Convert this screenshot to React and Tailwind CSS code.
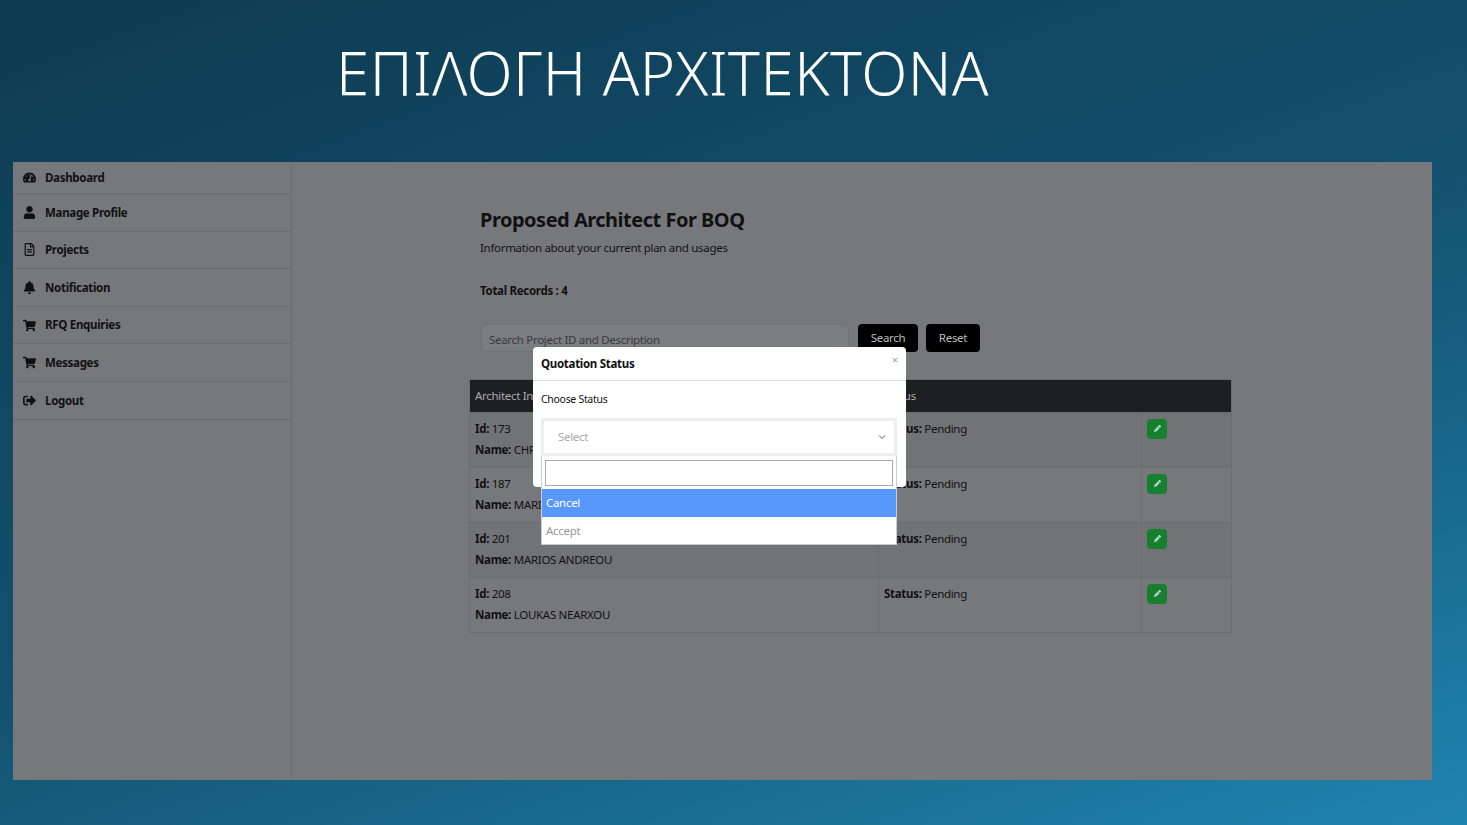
import React from "react";
import { FaTachometerAlt, FaUser, FaRegFileAlt, FaBell, FaShoppingCart, FaSignOutAlt, FaPencilAlt } from "react-icons/fa";

const nav = [
  [FaTachometerAlt, "Dashboard"],
  [FaUser, "Manage Profile"],
  [FaRegFileAlt, "Projects"],
  [FaBell, "Notification"],
  [FaShoppingCart, "RFQ Enquiries"],
  [FaShoppingCart, "Messages"],
  [FaSignOutAlt, "Logout"],
];
const rows = [
  ["173", "CHRISTOS"],
  ["187", "MARIA"],
  ["201", "MARIOS ANDREOU"],
  ["208", "LOUKAS NEARXOU"],
];

export default function App() {
  return (
    <div className="w-[1467px] h-[825px] overflow-hidden bg-[linear-gradient(160deg,#0e3a52_0%,#13506d_50%,#1f84b0_100%)] flex flex-col" style={{ fontFamily: '"Noto Sans", "Open Sans", sans-serif' }}>
      <div className="h-[162px] pl-[336px] pt-[42px] text-white text-[60px] font-light leading-none tracking-[0.5px]">ΕΠΙΛΟΓΗ ΑΡΧΙΤΕΚΤΟΝΑ</div>
      <div className="relative ml-[13px] w-[1419px] h-[618px] bg-[#77787c] flex tracking-[-0.3px]">
        <div className="w-[279px] border-r border-[#6c6d71] h-full">
          {nav.map(([I, t], i) => (
            <div key={t} className={`${i === 0 ? "h-[32px]" : "h-[37.6px]"} flex items-center gap-[9px] pl-[10px] border-b border-[#6c6d71] text-[11.5px] font-bold text-[#111]`}>
              <I className="w-[13px] h-[13px]" /> {t}
            </div>
          ))}
        </div>
        <div className="flex-1 pl-[188px] pt-[48px] text-[#111]">
          <div className="text-[20px] font-bold leading-none tracking-[-0.5px]">Proposed Architect For BOQ</div>
          <div className="text-[11.5px] mt-[9px]">Information about your current plan and usages</div>
          <div className="text-[11.5px] font-bold mt-[26px]">Total Records : 4</div>
          <div className="flex items-center mt-[24px] gap-[8px] ml-[1px]">
            <div className="w-[368px] h-[28px] bg-[#7c7d81] border border-[#707175] rounded-sm text-[11.5px] text-[#3a3b3d] pl-[7px] pt-[6px]">Search Project ID and Description</div>
            <div className="ml-[1px] w-[60px] h-[28px] rounded bg-black text-[#bbb] text-[11.5px] flex items-center justify-center">Search</div>
            <div className="w-[54px] h-[28px] rounded bg-black text-[#bbb] text-[11.5px] flex items-center justify-center">Reset</div>
          </div>
          <div className="mt-[27px] -ml-[11px] w-[763px] border border-[#6c6d71] text-[11.5px]">
            <div className="h-[32px] bg-[#1e1f22] text-[#aaa] flex items-center">
              <div className="w-[409px] pl-[5px]">Architect Info</div>
              <div className="w-[263px] pl-[5px]">Status</div>
            </div>
            {rows.map(([id, n], i) => (
              <div key={id} className={`h-[55px] flex border-t border-[#6c6d71] ${i % 2 === 0 ? "bg-[#727377]" : ""}`}>
                <div className="w-[409px] pl-[5px] pt-[5px] border-r border-[#6c6d71] leading-[21px]">
                  <div><b>Id:</b> {id}</div>
                  <div><b>Name:</b> {n}</div>
                </div>
                <div className="w-[263px] pl-[5px] pt-[5px] border-r border-[#6c6d71] leading-[21px]"><b>Status:</b> Pending</div>
                <div className="pl-[5px] pt-[6px]">
                  <div className="w-[20px] h-[20px] rounded-sm bg-[#17802f] flex items-center justify-center"><FaPencilAlt className="w-[7px] h-[7px] text-[#cde]" /></div>
                </div>
              </div>
            ))}
          </div>
        </div>
        <div className="absolute left-[520px] top-[185px] w-[373px] h-[140px] bg-white rounded-sm text-[#111]">
          <div className="h-[34px] border-b border-[#ddd] flex items-center justify-between px-[8px]">
            <span className="text-[11.5px] font-bold">Quotation Status</span>
            <span className="text-[#999] text-[11px] -mt-[6px]">×</span>
          </div>
          <div className="text-[10.5px] px-[8px] pt-[11px]">Choose Status</div>
        </div>
        <div className="absolute left-[528px] top-[256px] w-[356px] text-[11.5px]">
          <div className="h-[38px] border-[3px] border-[#eee] bg-white flex items-center justify-between pl-[14px] pr-[8px] text-[#aaa]">
            <span>Select</span>
            <svg width="8" height="6" viewBox="0 0 8 6"><path d="M1 1.5l3 3 3-3" stroke="#555" fill="none" strokeWidth="1" /></svg>
          </div>
          <div className="bg-white border border-[#ccc] border-t-0">
            <div className="p-[3px] pt-[4px]"><div className="h-[26px] border border-[#aaa]"></div></div>
            <div className="h-[28px] bg-[#5897fb] text-white flex items-center pl-[4px]">Cancel</div>
            <div className="h-[27px] text-[#999] flex items-center pl-[4px]">Accept</div>
          </div>
        </div>
      </div>
    </div>
  );
}
